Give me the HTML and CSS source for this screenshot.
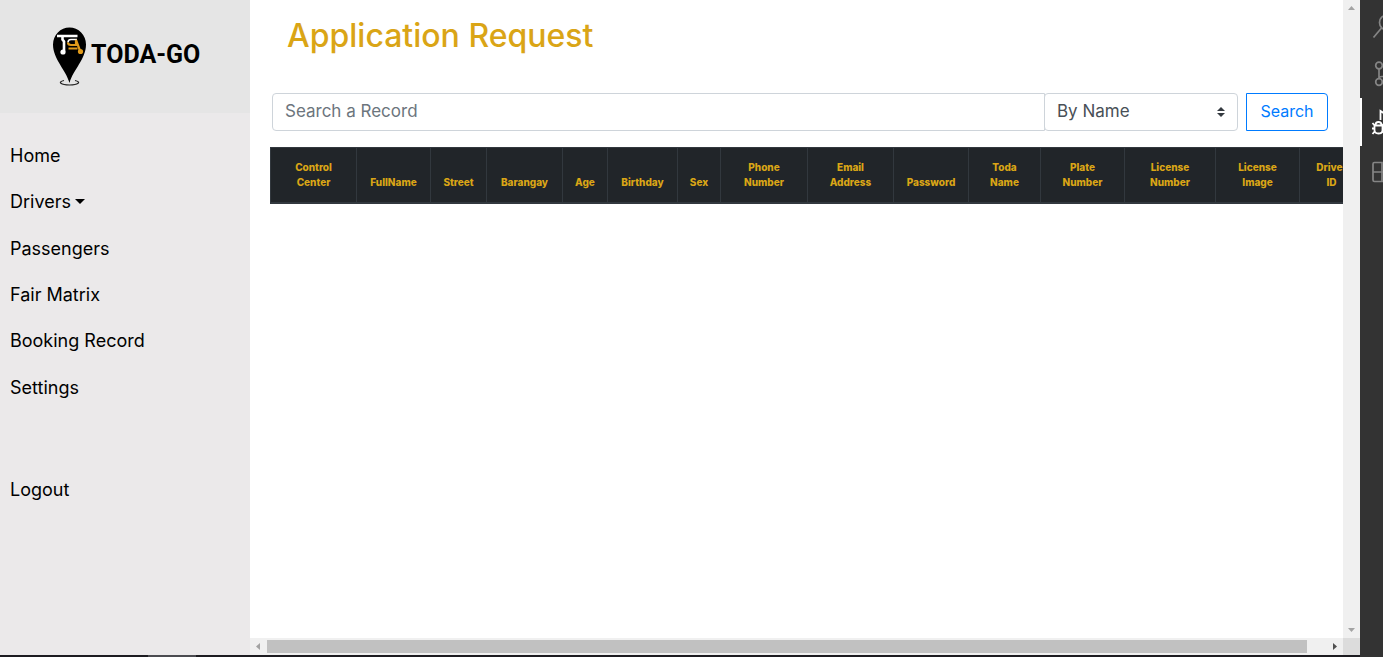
FILE: index.html
```html
<!DOCTYPE html>
<html lang="en">
<head>
<meta charset="utf-8">
<title>Application Request</title>
<link rel="stylesheet" href="styles.css">
</head>
<body>
<div class="desktop">
  <div class="browser">
    <aside class="sidebar">
      <div class="brand">
        <svg class="brand-pin" viewBox="0 0 36 60" aria-hidden="true">
          <path d="M12 53.500c-7 1.500-3 4.500 5.500 4.500s12.500-3 5.500-4.500" fill="none" stroke="#222" stroke-width="1.200"/>
          <path d="M17.500 56C14 43 1 32 1 17.500a16.500 17 0 0 1 33 0C34 32 21 43 17.500 56Z" fill="#000"/>
          <path d="M5 9h20.500M10.500 9v3.500l1.500 2v10" fill="none" stroke="#fff" stroke-width="2.600"/>
          <path d="M25 12.500h-6q-3 0-3 3" fill="none" stroke="#fff" stroke-width="1.600"/>
          <circle cx="11" cy="25" r="2.600" fill="#fff"/>
          <path d="M16 15.500q0 2.500 3 2.500h5v-5l4.500 12M16.500 21.500h9" fill="none" stroke="#e09a1a" stroke-width="2.200"/>
          <circle cx="28.500" cy="24.500" r="2.600" fill="#e09a1a"/>
        </svg>
        <span class="brand-name">TODA-GO</span>
      </div>
      <nav class="menu">
        <div class="menu-main">
          <a href="#home">Home</a>
          <a href="#drivers" class="dropdown">Drivers</a>
          <a href="#passengers">Passengers</a>
          <a href="#fair">Fair Matrix</a>
          <a href="#booking">Booking Record</a>
          <a href="#settings">Settings</a>
        </div>
        <a href="#logout" class="logout">Logout</a>
      </nav>
    </aside>
    <div class="pane">
      <main class="content">
        <h1>Application Request</h1>
        <form class="search">
          <input class="search-text" type="text" placeholder="Search a Record" aria-label="Search a Record">
          <div class="search-by">
            <select aria-label="Search by"><option>By Name</option></select>
            <svg viewBox="0 0 8 10" aria-hidden="true"><path d="M4 0 0 4h8zM4 10 0 6h8z" fill="#343a40"/></svg>
          </div>
          <button type="button" class="search-go">Search</button>
        </form>
        <div class="records">
          <table>
            <colgroup>
              <col class="w86"><col class="w74"><col class="w56"><col class="w76"><col class="w45"><col class="w70"><col class="w43"><col class="w87"><col class="w86"><col class="w75"><col class="w72"><col class="w84"><col class="w91"><col class="w84"><col class="w64">
            </colgroup>
            <thead>
              <tr>
                <th>Control Center</th><th>FullName</th><th>Street</th><th>Barangay</th><th>Age</th><th>Birthday</th><th>Sex</th><th>Phone Number</th><th>Email Address</th><th>Password</th><th>Toda Name</th><th>Plate Number</th><th>License Number</th><th>License Image</th><th>Driver ID</th>
              </tr>
            </thead>
          </table>
        </div>
      </main>
      <div class="vbar">
        <svg viewBox="0 0 7 4" aria-hidden="true"><path d="M0 4 3.500 0 7 4z" fill="#a3a3a3"/></svg>
        <svg viewBox="0 0 7 4" aria-hidden="true"><path d="M0 0 3.500 4 7 0z" fill="#a3a3a3"/></svg>
      </div>
      <div class="hbar">
        <svg viewBox="0 0 4 7" aria-hidden="true"><path d="M4 0 0 3.500 4 7z" fill="#a3a3a3"/></svg>
        <div class="track"><div class="thumb"></div></div>
        <svg viewBox="0 0 4 7" aria-hidden="true"><path d="M0 0 4 3.500 0 7z" fill="#505050"/></svg>
      </div>
      <div class="corner"></div>
    </div>
  </div>
  <div class="taskbar"><div class="task"></div></div>
  <div class="activity">
    <button type="button" aria-label="Search files"><svg viewBox="0 0 48 48"><circle cx="27" cy="20.500" r="7.500"/><path d="m21.500 26-8 9.500"/></svg></button>
    <button type="button" aria-label="Source control"><svg viewBox="0 0 48 48"><circle cx="19" cy="15.500" r="3.300"/><circle cx="19" cy="32" r="3.300"/><circle cx="29" cy="19" r="3.300"/><path d="M19 19v9.500M29 22.500q0 4-5 4h-2q-3 0-3 2"/></svg></button>
    <button type="button" class="active" aria-label="Run and debug"><svg viewBox="0 0 48 48"><path d="M20.500 22V13l14 9-9 6"/><path d="M14.500 27.500h8v4.500q0 3.500-4 3.500t-4-3.500zM15.500 27q0-3 3-3t3 3M12.500 25l2.500 3M24.500 25 22 28M12 30.500h3M22 30.500h3M12.500 36l2.500-3M24.500 36 22 33"/></svg></button>
    <button type="button" aria-label="Extensions"><svg viewBox="0 0 48 48"><path d="M13 18q0-1.500 1.500-1.500H22v19h-7.500q-1.500 0-1.500-1.500zM13 26h18v9.500h-9M26 13h8v8h-8z"/></svg></button>
  </div>
</div>
</body>
</html>
```

FILE: styles.css
```css
* { box-sizing: border-box; }
body {
  margin: 0;
  font-family: Inter, "Open Sans", sans-serif;
  font-size: 17px;
  color: #000;
  background: #fff;
}
.desktop {
  display: grid;
  grid-template-columns: minmax(0, 1fr) 23px;
  grid-template-rows: minmax(0, 1fr) 2px;
  height: 100vh;
}
.browser {
  display: grid;
  grid-template-columns: 250px minmax(0, 1fr);
}

.sidebar { background: #ebe9ea; }
.brand {
  display: flex;
  align-items: center;
  gap: 3px;
  height: 113px;
  padding: 0 0 0 52px;
  background: #e5e5e5;
}
.brand-pin { width: 36px; height: 60px; flex: none; }
.brand-name {
  font-family: Roboto, sans-serif;
  font-size: 25px;
  font-weight: 700;
  line-height: 30px;
  padding-bottom: 4px;
}
.menu { padding: 20px 0; }
.menu-main {
  display: flex;
  flex-direction: column;
  min-height: 278px;
}
.menu a {
  display: flex;
  align-items: center;
  flex: 1;
  padding: 10px;
  font-size: 18px;
  line-height: 26px;
  color: #000;
  text-decoration: none;
}
.menu .dropdown::after {
  content: "";
  margin: 0 0 2px 4px;
  border: 5px solid transparent;
  border-top-color: #000;
  border-bottom: 0;
}
.menu .logout { margin-top: 56px; }

.pane {
  display: grid;
  grid-template-columns: minmax(0, 1fr) 17px;
  grid-template-rows: minmax(0, 1fr) 17px;
}
.content { padding: 16px 0 0 20px; overflow: hidden; }
h1 {
  margin: 0 0 37px 17px;
  font-size: 32px;
  font-weight: 500;
  line-height: 40px;
  color: #daa516;
}
.search {
  display: flex;
  height: 38px;
  margin: 0 15px 16px 2px;
}
.search-text, .search-by select, .search-go {
  height: 38px;
  padding: 5px 12px 7px;
  font: inherit;
  line-height: 24px;
  background: #fff;
  border: 1px solid #ced4da;
}
.search-text {
  flex: 1;
  min-width: 0;
  border-radius: 4px 0 0 4px;
}
.search-text::placeholder { color: #6c757d; opacity: 1; }
.search-by {
  display: flex;
  align-items: center;
  flex: 0 0 194px;
  margin-left: -1px;
}
.search-by select {
  width: 100%;
  appearance: none;
  color: #495057;
  border-radius: 4px;
}
.search-by svg { width: 8px; height: 10px; flex: none; margin: 0 13px 0 -21px; pointer-events: none; }
.search-go {
  width: 82px;
  padding: 5px 0 7px;
  margin-left: 8px;
  font-size: 16px;
  color: #007bff;
  border-color: #007bff;
  border-radius: 0 4px 4px 0;
}

.records { overflow: hidden; }
table {
  width: 1093px;
  table-layout: fixed;
  border-collapse: separate;
  border-spacing: 0;
  background: #212529;
  color: #daa516;
  border-left: 1px solid #32383e;
}
th {
  padding: 12px 11px;
  font-size: 10px;
  font-weight: 800;
  line-height: 15px;
  text-align: center;
  vertical-align: bottom;
  border: solid #32383e;
  border-width: 1px 1px 2px 0;
}
.w43 { width: 43px; }
.w45 { width: 45px; }
.w56 { width: 56px; }
.w64 { width: 64px; }
.w70 { width: 70px; }
.w72 { width: 72px; }
.w74 { width: 74px; }
.w75 { width: 75px; }
.w76 { width: 76px; }
.w84 { width: 84px; }
.w86 { width: 86px; }
.w87 { width: 87px; }
.w91 { width: 91px; }

.vbar, .hbar {
  display: flex;
  align-items: center;
  justify-content: space-between;
  background: #f0f0f0;
}
.vbar { flex-direction: column; padding: 6px 0; }
.vbar svg { width: 7px; height: 4px; }
.hbar { padding: 0 6px; }
.hbar svg { width: 4px; height: 7px; flex: none; }
.track { flex: 1; margin: 0 7px; }
.thumb { width: 98.2%; height: 13px; background: #c1c1c1; }
.corner { background: #dcdcdc; }

.taskbar { grid-area: 2 / 1; background: #1c1b20; padding-left: 148px; }
.task { width: 48px; height: 2px; background: #4b4b50; }

.activity {
  grid-area: 1 / 2 / 3 / 3;
  padding-top: 2px;
  overflow: hidden;
  background: #333;
}
.activity button {
  display: block;
  width: 48px;
  height: 48px;
  padding: 0;
  background: none;
  border: 0;
}
.activity .active { box-shadow: inset 2px 0 #fff; }
.activity svg {
  display: block;
  width: 48px;
  height: 48px;
  fill: none;
  stroke: #858585;
  stroke-width: 1.7;
}
.activity .active svg { stroke: #fff; stroke-width: 1.8; }
```
